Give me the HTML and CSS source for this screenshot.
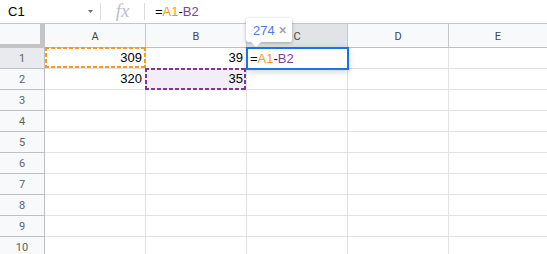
FILE: index.html
```html
<!DOCTYPE html>
<html>
<head>
<meta charset="utf-8">
<link rel="stylesheet" href="styles.css">
</head>
<body>
<div class="app">
  <div class="fbar">
    <div class="namebox"><span>C1</span><svg class="caret" width="5" height="3" viewBox="0 0 5 3"><path d="M0 0h5L2.5 3z" fill="#6f6f6f"/></svg></div>
    <div class="sep"></div>
    <div class="fx">fx</div>
    <div class="sep"></div>
    <div class="formula">=<span class="r1">A1</span>-<span class="r2">B2</span></div>
  </div>
  <div class="grid">
    <div class="corner"></div>
    <div class="ch">A</div>
    <div class="ch">B</div>
    <div class="ch sel">C</div>
    <div class="ch">D</div>
    <div class="ch last">E</div>

    <div class="rh sel">1</div>
    <div class="cell"><span>309</span><div class="dash orange"></div></div>
    <div class="cell"><span>39</span></div>
    <div class="cell"><div class="editor">=<span class="r1">A1</span>-<span class="r2">B2</span></div><div class="tip"><span class="tipval">274</span><span class="tipx">×</span></div></div>
    <div class="cell"></div>
    <div class="cell last"></div>

    <div class="rh">2</div>
    <div class="cell"><span>320</span></div>
    <div class="cell purplefill"><span>35</span><div class="dash purple"></div></div>
    <div class="cell"></div>
    <div class="cell"></div>
    <div class="cell last"></div>

    <div class="rh">3</div><div class="cell"></div><div class="cell"></div><div class="cell"></div><div class="cell"></div><div class="cell last"></div>
    <div class="rh">4</div><div class="cell"></div><div class="cell"></div><div class="cell"></div><div class="cell"></div><div class="cell last"></div>
    <div class="rh">5</div><div class="cell"></div><div class="cell"></div><div class="cell"></div><div class="cell"></div><div class="cell last"></div>
    <div class="rh">6</div><div class="cell"></div><div class="cell"></div><div class="cell"></div><div class="cell"></div><div class="cell last"></div>
    <div class="rh">7</div><div class="cell"></div><div class="cell"></div><div class="cell"></div><div class="cell"></div><div class="cell last"></div>
    <div class="rh">8</div><div class="cell"></div><div class="cell"></div><div class="cell"></div><div class="cell"></div><div class="cell last"></div>
    <div class="rh">9</div><div class="cell"></div><div class="cell"></div><div class="cell"></div><div class="cell"></div><div class="cell last"></div>
    <div class="rh">10</div><div class="cell"></div><div class="cell"></div><div class="cell"></div><div class="cell"></div><div class="cell last"></div>
  </div>
</div>
</body>
</html>
```
FILE: styles.css
```css
* { box-sizing: border-box; }
html, body { margin: 0; padding: 0; background: #fff; }
body { width: 547px; height: 254px; overflow: hidden; font-family: "Liberation Sans", Arial, sans-serif; }

.app { width: 547px; height: 254px; overflow: hidden; }

.fbar {
  height: 24px;
  display: flex;
  align-items: center;
  border-bottom: 1px solid #c7c7c7;
  font-size: 13px;
  color: #000;
}
.namebox {
  width: 100px;
  display: flex;
  align-items: center;
  justify-content: space-between;
  padding: 0 7px 0 8px;
}
.caret { display: block; }
.sep { width: 1px; height: 17px; background: #dadce0; }
.fx {
  width: 43px;
  text-align: center;
  font-family: "Liberation Serif", "DejaVu Serif", serif;
  font-style: italic;
  font-size: 19px;
  color: #bdc1c6;
  line-height: 20px;
  margin-top: -2px;
}
.formula { padding-left: 10px; }
.r1 { color: #f59a23; }
.r2 { color: #7e3f98; }

.grid {
  display: grid;
  grid-template-columns: 45px 101px 101px 101px 101px 98px;
  grid-template-rows: 24px repeat(10, 21px);
}
.corner {
  background: #f8f9fa;
  border-right: 5px solid #c4c4c4;
  border-bottom: 4px solid #c4c4c4;
}
.ch {
  background: #f8f9fa;
  border-right: 1px solid #c7c7c7;
  border-bottom: 1px solid #c0c0c0;
  display: flex;
  align-items: center;
  justify-content: center;
  font-family: Roboto, "Liberation Sans", sans-serif;
  font-size: 11px;
  color: #444746;
  padding-top: 1px;
}
.ch.sel { background: #e1e3e6; }
.ch.last { border-right: none; }
.rh {
  background: #f8f9fa;
  border-right: 1px solid #c0c0c0;
  border-bottom: 1px solid #c0c0c0;
  display: flex;
  align-items: center;
  justify-content: center;
  font-family: Roboto, "Liberation Sans", sans-serif;
  font-size: 11px;
  color: #5f6368;
}
.rh.sel { background: #e8eaed; }
.cell {
  position: relative;
  border-right: 1px solid #e2e2e3;
  border-bottom: 1px solid #e2e2e3;
  display: flex;
  align-items: flex-end;
  justify-content: flex-end;
  padding: 0 3px 3px 0;
  font-size: 13px;
  line-height: 15px;
  color: #000;
}
.cell.last { border-right: none; }
.purplefill { background: #f3edf7; }

.dash {
  position: absolute;
  pointer-events: none;
}
.dash.orange {
  top: -1px; left: 0; right: -1px; bottom: 0;
  --c: #f59a23;
}
.dash.purple {
  top: -1px; left: -1px; right: 0; bottom: -1px;
  --c: #7e3794;
}
.dash {
  background:
    repeating-linear-gradient(90deg, var(--c) 0 4px, transparent 4px 6px) left top / 100% 2px no-repeat,
    repeating-linear-gradient(90deg, var(--c) 0 4px, transparent 4px 6px) left bottom / 100% 2px no-repeat,
    repeating-linear-gradient(180deg, var(--c) 0 4px, transparent 4px 6px) left top / 2px 100% no-repeat,
    repeating-linear-gradient(180deg, var(--c) 0 4px, transparent 4px 6px) right top / 2px 100% no-repeat;
}

.editor {
  position: absolute;
  top: -1px; left: -1px; right: -2px; bottom: -2px;
  border: 2px solid #1a73e8;
  background: #fff;
  box-shadow: 0 2px 6px rgba(60, 64, 67, 0.22);
  padding: 1px 0 0 2px;
  font-size: 13px;
  line-height: 17px;
  z-index: 2;
}
.tip {
  position: absolute;
  left: -1px;
  top: -30px;
  width: 46px;
  height: 24px;
  background: #fff;
  border-radius: 2px;
  box-shadow: 0 1px 3px rgba(60, 64, 67, 0.3), 0 1px 4px rgba(60, 64, 67, 0.12);
  display: flex;
  align-items: center;
  padding-left: 7px;
  gap: 4px;
  z-index: 3;
}
.tip::after {
  content: "";
  position: absolute;
  left: 5px;
  bottom: -5px;
  border-left: 5px solid transparent;
  border-right: 5px solid transparent;
  border-top: 5px solid #fff;
}
.tipval { color: #4a80e0; font-size: 13px; }
.tipx { color: #9aa0a6; font-size: 15px; font-family: Roboto, "Liberation Sans", sans-serif; }
```
